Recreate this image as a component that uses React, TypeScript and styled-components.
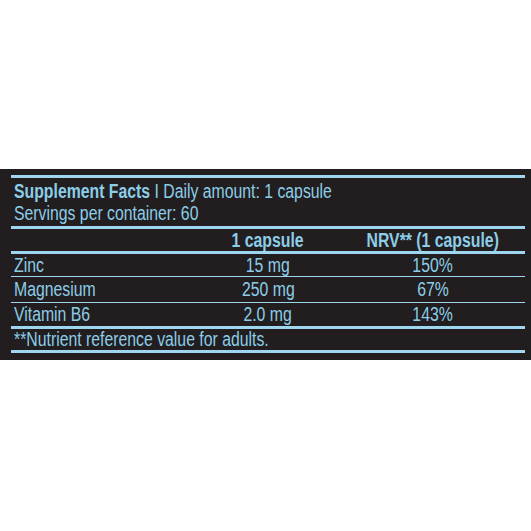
import React from "react";
import styled, { createGlobalStyle } from "styled-components";

const Global = createGlobalStyle`
  html, body { margin: 0; padding: 0; background: #ffffff; }
  body { font-family: "Liberation Sans", Arial, sans-serif; }
`;

const LINE = "#9dd6ee";
const TEXT = "#8ccde8";

const Page = styled.div`
  width: 531px;
  height: 531px;
  padding-top: 169px;
  box-sizing: border-box;
`;

const Panel = styled.section`
  background: #221e1f;
  padding: 6px 6px 7px 11px;
  color: ${TEXT};
  font-family: "Liberation Sans", Arial, sans-serif;
  font-size: 20px;
`;

/* Condensed face emulation: the reference uses a condensed grotesque */
const Narrow = styled.span<{ $origin?: string }>`
  display: inline-block;
  white-space: nowrap;
  transform: scaleX(0.79);
  transform-origin: ${(p) => p.$origin ?? "left"} center;
`;

const TitleBlock = styled.div`
  border-top: 3px solid ${LINE};
  border-bottom: 3px solid ${LINE};
  padding: 2px 3px;
  line-height: 22px;
`;

const TitleLine = styled.div`
  white-space: nowrap;
  height: 22px;
`;

const Bold = styled.span`
  font-weight: 700;
`;

const Row = styled.div<{ $h: number; $line: number; $bold?: boolean }>`
  display: grid;
  grid-template-columns: 207px 100px 1fr;
  align-items: center;
  height: ${(p) => p.$h}px;
  line-height: ${(p) => p.$h}px;
  border-bottom: ${(p) => p.$line}px solid ${LINE};
  font-weight: ${(p) => (p.$bold ? 700 : 400)};
`;

const Name = styled.div`
  padding-left: 3px;
  white-space: nowrap;
`;

const Amount = styled.div`
  text-align: center;
  white-space: nowrap;
`;

const Nrv = styled.div`
  text-align: center;
  padding-left: 23px;
  white-space: nowrap;
`;

const Foot = styled.div`
  height: 21px;
  line-height: 21px;
  padding-left: 3px;
  border-bottom: 3px solid ${LINE};
  white-space: nowrap;
`;

const rows = [
  { name: "Zinc", amount: "15 mg", nrv: "150%", h: 22, line: 1 },
  { name: "Magnesium", amount: "250 mg", nrv: "67%", h: 25, line: 1 },
  { name: "Vitamin B6", amount: "2.0 mg", nrv: "143%", h: 23, line: 3 },
];

export default function App() {
  return (
    <Page>
      <Global />
      <Panel>
        <TitleBlock>
          <TitleLine>
            <Narrow>
              <Bold>Supplement Facts</Bold> I Daily amount: 1 capsule
            </Narrow>
          </TitleLine>
          <TitleLine>
            <Narrow>Servings per container: 60</Narrow>
          </TitleLine>
        </TitleBlock>
        <Row $h={22} $line={3} $bold>
          <Name />
          <Amount>
            <Narrow $origin="center">1 capsule</Narrow>
          </Amount>
          <Nrv>
            <Narrow $origin="center">NRV** (1 capsule)</Narrow>
          </Nrv>
        </Row>
        {rows.map((r) => (
          <Row key={r.name} $h={r.h} $line={r.line}>
            <Name>
              <Narrow>{r.name}</Narrow>
            </Name>
            <Amount>
              <Narrow $origin="center">{r.amount}</Narrow>
            </Amount>
            <Nrv>
              <Narrow $origin="center">{r.nrv}</Narrow>
            </Nrv>
          </Row>
        ))}
        <Foot>
          <Narrow>**Nutrient reference value for adults.</Narrow>
        </Foot>
      </Panel>
    </Page>
  );
}
